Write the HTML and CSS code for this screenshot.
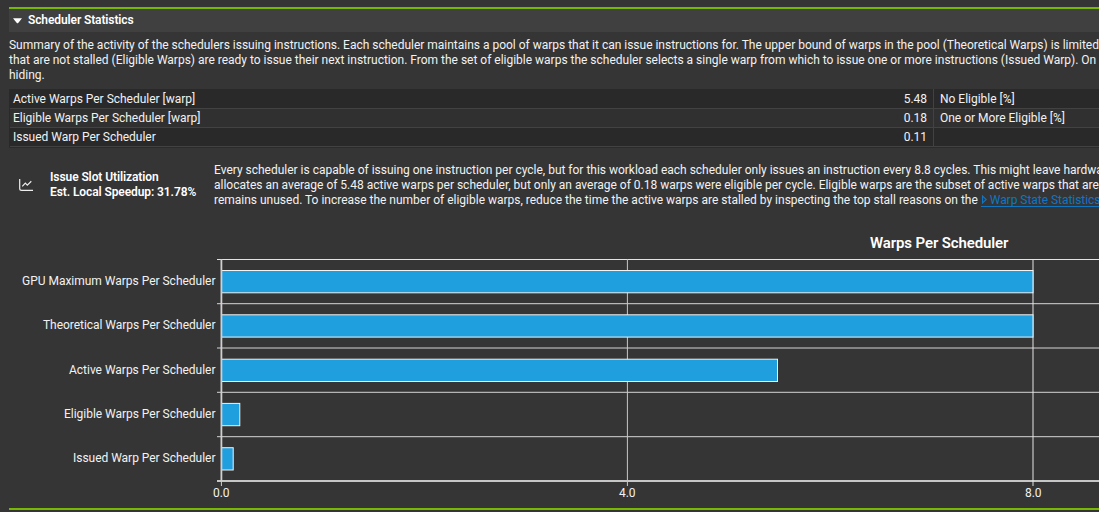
FILE: index.html
```html
<!DOCTYPE html>
<html lang="en">
<head>
<meta charset="utf-8">
<title>Scheduler Statistics</title>
<link rel="stylesheet" href="styles.css">
</head>
<body>
<section class="panel">
  <header class="panel-header">
    <svg class="caret" width="9" height="6" viewBox="0 0 9 6"><path d="M0 .3h9L5.2 5Q4.5 5.7 3.8 5Z" fill="#fff"/></svg>
    <h1>Scheduler Statistics</h1>
  </header>
  <div class="summary">
    <p>Summary of the activity of the schedulers issuing instructions. Each scheduler maintains a pool of warps that it can issue instructions for. The upper bound of warps in the pool (Theoretical Warps) is limited</p>
    <p>that are not stalled (Eligible Warps) are ready to issue their next instruction. From the set of eligible warps the scheduler selects a single warp from which to issue one or more instructions (Issued Warp). On</p>
    <p>hiding.</p>
  </div>
  <div class="metrics">
    <div class="row"><span class="name">Active Warps Per Scheduler [warp]</span><span class="value">5.48</span><span class="other">No Eligible [%]</span></div>
    <div class="row alt"><span class="name">Eligible Warps Per Scheduler [warp]</span><span class="value">0.18</span><span class="other">One or More Eligible [%]</span></div>
    <div class="row"><span class="name">Issued Warp Per Scheduler</span><span class="value">0.11</span><span class="other"></span></div>
  </div>
  <div class="advice">
    <svg class="chart-icon" width="15" height="14" viewBox="0 0 15 14" fill="none" stroke="#eee" stroke-width="1.2"><path d="M.7 1v9.500q0 1.900 1.900 1.900H14"/><path d="M3.300 8.300 6.300 5.100 8.300 7.100 12.300 3.200"/></svg>
    <div class="advice-title"><p>Issue Slot Utilization</p><p>Est. Local Speedup: 31.78%</p></div>
    <div class="advice-text">
      <p>Every scheduler is capable of issuing one instruction per cycle, but for this workload each scheduler only issues an instruction every 8.8 cycles. This might leave hardwa</p>
      <p>allocates an average of 5.48 active warps per scheduler, but only an average of 0.18 warps were eligible per cycle. Eligible warps are the subset of active warps that are</p>
      <p>remains unused. To increase the number of eligible warps, reduce the time the active warps are stalled by inspecting the top stall reasons on the <a class="link" href="#"><svg width="6" height="9" viewBox="0 0 6 9"><path d="M1.500 1V8L5.300 4.500Z" fill="none" stroke="#0f76c4" stroke-width="1.100"/></svg> Warp State Statistics</a></p>
    </div>
  </div>
  <h2 class="chart-title">Warps Per Scheduler</h2>
  <svg class="chart" width="1090" height="250" viewBox="9 257 1090 250">
    <g class="grid">
      <path d="M217 259.500H1099" stroke="#e3e3e3"/>
      <path d="M217 303.700H1099M217 348H1099M217 392.300H1099M217 436.700H1099" stroke="#d5d5d5"/>
      <path d="M217 481H1099" stroke="#c6c6c6" stroke-width="2"/>
      <path d="M627.400 259V486" stroke="#c9c9c9"/>
      <path d="M1033 259V486" stroke="#e6e6e6"/>
    </g>
    <g class="bars">
      <rect x="221.500" y="270.500" width="811.500" height="22.300"/>
      <rect x="221.500" y="314.800" width="811.500" height="22.300"/>
      <rect x="221.500" y="359.200" width="556" height="22.300"/>
      <rect x="221.500" y="403.400" width="18.300" height="22.300"/>
      <rect x="221.500" y="447.700" width="11.700" height="22.300"/>
    </g>
    <path d="M221.400 259V481" stroke="#d0d0d0" stroke-width="1.800"/>
    <path d="M221.400 481V486" stroke="#d0d0d0"/>
    <g class="category">
      <text x="215.500" y="285" textLength="193.500">GPU Maximum Warps Per Scheduler</text>
      <text x="215.500" y="329" textLength="172.500">Theoretical Warps Per Scheduler</text>
      <text x="215.500" y="374" textLength="146.500">Active Warps Per Scheduler</text>
      <text x="215.500" y="418" textLength="151.500">Eligible Warps Per Scheduler</text>
      <text x="215.500" y="462" textLength="142.500">Issued Warp Per Scheduler</text>
    </g>
    <g class="ticks">
      <text x="221.300" y="497">0.0</text>
      <text x="627.300" y="497">4.0</text>
      <text x="1033.300" y="497">8.0</text>
    </g>
  </svg>
</section>
</body>
</html>
```
FILE: styles.css
```css
* { box-sizing: border-box; }
body { margin: 0; height: 512px; overflow: hidden; background: #353535; color: #f2f2f2; font: 12px/15px Roboto, sans-serif; letter-spacing: -0.009px; }
h1, h2, p { margin: 0; white-space: nowrap; }
.panel { width: 1090px; height: 503px; margin: 7px 0 0 9px; border-top: 2px solid #76b900; border-bottom: 2px solid #76b900; display: flex; flex-direction: column; }
.panel-header { height: 23px; flex: none; background: #404040; display: flex; align-items: flex-start; padding: 4px 0 0 4px; gap: 6px; }
.caret { margin-top: 5px; }
.panel-header h1 { font-size: 12px; line-height: 15px; font-weight: 600; letter-spacing: -0.11px; color: #fff; }
.summary { height: 57px; flex: none; padding-top: 6px; }
.metrics { height: 59px; flex: none; background: #292929; border-bottom: 1px solid #2b2b2b; }
.row { height: 19px; margin-left: 1px; display: grid; grid-template-columns: 700px 1fr 166px; line-height: 18px; border-bottom: 1px solid #424242; letter-spacing: -0.015px; }
.row:first-child { height: 20px; }
.row:first-child span { padding-top: 1px; }
.alt { background: #303030; }
.name { margin-left: 3px; }
.value { text-align: right; padding-right: 6px; }
.other { padding-left: 6px; border-left: 1px solid #424242; }
.advice { height: 88px; flex: none; display: flex; align-items: flex-start; padding-top: 14px; }
.chart-icon { flex: none; margin: 16px 0 0 10px; }
.advice-title { width: 180px; padding: 8px 0 0 16px; font-weight: 600; letter-spacing: -0.09px; color: #fff; flex: none; }
.advice-text { padding-top: 1px; }
.link { color: #0f76c4; text-decoration: none; box-shadow: inset 0 -1px #0f76c4; letter-spacing: -0.035px; }
.chart-title { margin: 0 0 0 861px; height: 15px; font-size: 15px; line-height: 14px; font-weight: 600; letter-spacing: -0.12px; color: #fff; }
.chart { margin-top: 6px; flex: none; }
.bars rect { fill: #209fdf; stroke: #f2f2f2; }
.category text { text-anchor: end; }
.chart text { fill: #f2f2f2; }
.ticks text { text-anchor: middle; }
```
